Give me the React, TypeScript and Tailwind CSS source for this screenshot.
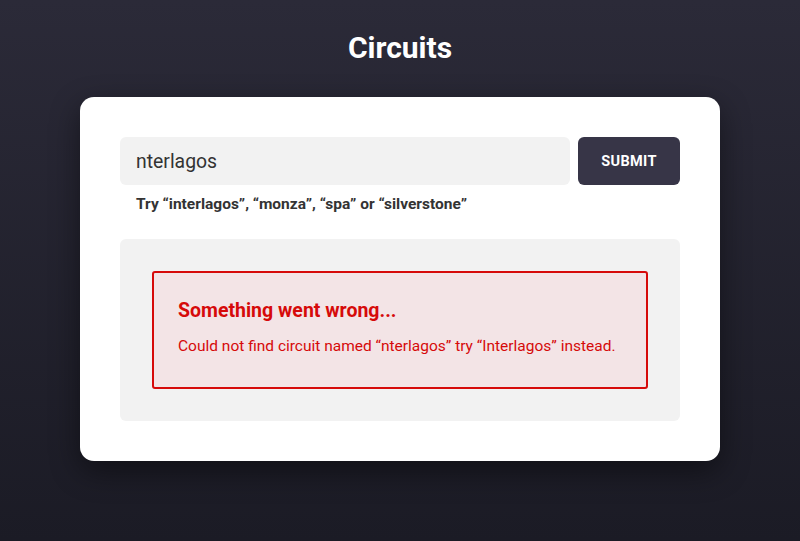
import React from 'react';

const App = () => {
  const [query, setQuery] = React.useState('nterlagos');

  return (
    <div
      className="min-h-screen w-full bg-gradient-to-b from-[#2b2a38] to-[#1b1b25] flex flex-col items-center"
      style={{ fontFamily: 'Roboto, "Noto Sans", sans-serif' }}
    >
      <h1 className="mt-[30px] text-[30px] leading-[36px] font-bold text-white">Circuits</h1>

      {/* Card */}
      <div className="mt-[31px] w-[640px] bg-white rounded-[14px] shadow-[0_10px_30px_rgba(0,0,0,0.45)] p-10">
        <form className="flex gap-2" onSubmit={(e) => e.preventDefault()}>
          <input
            value={query}
            onChange={(e) => setQuery(e.target.value)}
            className="flex-1 h-12 rounded-md bg-[#f2f2f2] px-4 text-[19.4px] text-[#333] outline-none"
          />
          <button className="w-[102px] h-12 pt-[2px] rounded-md bg-[#373547] text-white text-[14.5px] font-bold tracking-wide">
            SUBMIT
          </button>
        </form>
        <p className="mt-[9px] px-4 text-[15.5px] leading-[20px] font-bold text-[#333]">
          Try “interlagos”, “monza”, “spa” or “silverstone”
        </p>

        {/* Result panel */}
        <div className="mt-[25px] bg-[#f2f2f2] rounded-md p-8">
          <div className="border-2 border-[#d60a0a] bg-[#f3e4e6] rounded-[3px] px-6 pt-[25px] pb-[31px]">
            <h2 className="text-[19.5px] leading-[26px] font-bold text-[#d60a0a]">Something went wrong...</h2>
            <p className="mt-[12px] text-[15.5px] leading-[20px] text-[#d60a0a]">
              Could not find circuit named “nterlagos” try “Interlagos” instead.
            </p>
          </div>
        </div>
      </div>
    </div>
  );
};

export default App;
